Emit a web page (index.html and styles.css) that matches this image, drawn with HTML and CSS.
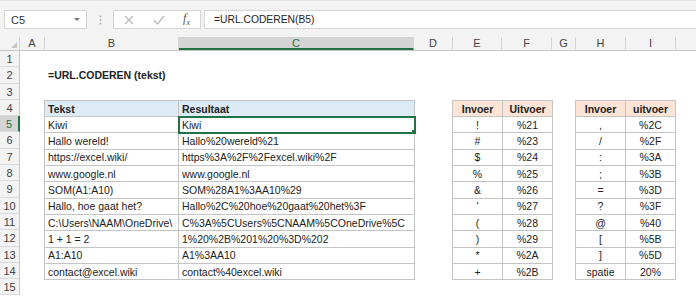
FILE: index.html
```html
<!DOCTYPE html>
<html lang="nl">
<head>
    <meta charset="UTF-8">
    <meta name="viewport" content="width=device-width, initial-scale=1.0">
    <title>URL.CODEREN</title>
    <link rel="stylesheet" href="styles.css">
</head>
<body>

    <!-- Formula bar -->
    <div class="formula-bar">
        <div class="name-box">
            <span>C5</span>
            <span class="caret"></span>
        </div>
        <div class="grip">
            <svg width="3" height="10" viewBox="0 0 3 10">
                <circle cx="1.5" cy="1.5" r="0.9" fill="#b0b0b0"/>
                <circle cx="1.5" cy="5" r="0.9" fill="#b0b0b0"/>
                <circle cx="1.5" cy="8.5" r="0.9" fill="#b0b0b0"/>
            </svg>
        </div>
        <div class="fx-buttons">
            <svg width="10" height="10" viewBox="0 0 10 10"><path d="M1 1 L9 9 M9 1 L1 9" stroke="#b8b8b8" stroke-width="1.2" fill="none"/></svg>
            <svg width="12" height="10" viewBox="0 0 12 10"><path d="M1 5.5 L4.5 9 L11 1" stroke="#b8b8b8" stroke-width="1.2" fill="none"/></svg>
            <span class="fx">f<sub>x</sub></span>
        </div>
        <div class="formula-input">=URL.CODEREN(B5)</div>
    </div>

    <!-- Column headers -->
    <div class="col-headers">
        <div class="corner"><span class="corner-mark"></span></div>
        <div class="col-head col-a">A</div>
        <div class="col-head col-b">B</div>
        <div class="col-head col-c active">C</div>
        <div class="col-head col-d">D</div>
        <div class="col-head col-e">E</div>
        <div class="col-head col-f">F</div>
        <div class="col-head col-g">G</div>
        <div class="col-head col-h">H</div>
        <div class="col-head col-i">I</div>
        <div class="col-head col-rest"></div>
    </div>

    <div class="sheet">
        <div class="row-headers">
            <div class="row-head">1</div>
            <div class="row-head">2</div>
            <div class="row-head">3</div>
            <div class="row-head">4</div>
            <div class="row-head active">5</div>
            <div class="row-head">6</div>
            <div class="row-head">7</div>
            <div class="row-head">8</div>
            <div class="row-head">9</div>
            <div class="row-head">10</div>
            <div class="row-head">11</div>
            <div class="row-head">12</div>
            <div class="row-head">13</div>
            <div class="row-head">14</div>
            <div class="row-head">15</div>
        </div>

        <div class="canvas">
            <div class="title">=URL.CODEREN (tekst)</div>

            <!-- Voorbeelden -->
            <table class="data examples">
                <colgroup><col class="w-b"><col class="w-c"></colgroup>
                <tr class="head-blue"><th>Tekst</th><th>Resultaat</th></tr>
                <tr><td>Kiwi</td><td class="selected">Kiwi<span class="handle"></span></td></tr>
                <tr><td>Hallo wereld!</td><td>Hallo%20wereld%21</td></tr>
                <tr><td>https://excel.wiki/</td><td>https%3A%2F%2Fexcel.wiki%2F</td></tr>
                <tr><td>www.google.nl</td><td>www.google.nl</td></tr>
                <tr><td>SOM(A1:A10)</td><td>SOM%28A1%3AA10%29</td></tr>
                <tr><td>Hallo, hoe gaat het?</td><td>Hallo%2C%20hoe%20gaat%20het%3F</td></tr>
                <tr><td class="clip">C:\Users\NAAM\OneDrive\</td><td>C%3A%5CUsers%5CNAAM%5COneDrive%5C</td></tr>
                <tr><td>1 + 1 = 2</td><td>1%20%2B%201%20%3D%202</td></tr>
                <tr><td>A1:A10</td><td>A1%3AA10</td></tr>
                <tr><td>contact@excel.wiki</td><td>contact%40excel.wiki</td></tr>
            </table>

            <!-- Tekens 1 -->
            <table class="data codes codes-1">
                <colgroup><col class="w-e"><col class="w-f"></colgroup>
                <tr class="head-orange"><th>Invoer</th><th>Uitvoer</th></tr>
                <tr><td>!</td><td>%21</td></tr>
                <tr><td>#</td><td>%23</td></tr>
                <tr><td>$</td><td>%24</td></tr>
                <tr><td>%</td><td>%25</td></tr>
                <tr><td>&amp;</td><td>%26</td></tr>
                <tr><td>'</td><td>%27</td></tr>
                <tr><td>(</td><td>%28</td></tr>
                <tr><td>)</td><td>%29</td></tr>
                <tr><td>*</td><td>%2A</td></tr>
                <tr><td>+</td><td>%2B</td></tr>
            </table>

            <!-- Tekens 2 -->
            <table class="data codes codes-2">
                <colgroup><col class="w-h"><col class="w-i"></colgroup>
                <tr class="head-orange"><th>Invoer</th><th>uitvoer</th></tr>
                <tr><td>,</td><td>%2C</td></tr>
                <tr><td>/</td><td>%2F</td></tr>
                <tr><td>:</td><td>%3A</td></tr>
                <tr><td>;</td><td>%3B</td></tr>
                <tr><td>=</td><td>%3D</td></tr>
                <tr><td>?</td><td>%3F</td></tr>
                <tr><td>@</td><td>%40</td></tr>
                <tr><td>[</td><td>%5B</td></tr>
                <tr><td>]</td><td>%5D</td></tr>
                <tr><td>spatie</td><td>20%</td></tr>
            </table>
        </div>
    </div>

</body>
</html>
```

FILE: styles.css
```css
body {
    margin: 0;
    width: 696px;
    height: 297px;
    overflow: hidden;
    font-family: "Liberation Sans", Arial, sans-serif;
    background: #fff;
    color: #222;
}

/* Formula bar */
.formula-bar {
    display: flex;
    height: 37px;
    box-sizing: border-box;
    padding: 9px 0 8px 4px;
    background: #f3f3f3;
    border-top: 1px solid #e2e2e2;
}

.name-box {
    width: 83px;
    display: flex;
    align-items: center;
    justify-content: space-between;
    padding: 0 6px 0 6px;
    box-sizing: border-box;
    background: #fff;
    border: 1px solid #d6d6d6;
    font-size: 11px;
    color: #333;
}

.caret {
    width: 0;
    height: 0;
    border-left: 3px solid transparent;
    border-right: 3px solid transparent;
    border-top: 3px solid #777;
}

.grip {
    width: 26px;
    display: flex;
    align-items: center;
    justify-content: center;
}

.fx-buttons {
    width: 88px;
    display: flex;
    align-items: center;
    justify-content: space-between;
    padding: 0 10px 0 10px;
    box-sizing: border-box;
    background: #fff;
    border: 1px solid #d6d6d6;
}

.fx {
    font-family: "Liberation Serif", "Times New Roman", serif;
    font-style: italic;
    font-size: 12px;
    color: #555;
}

.fx sub {
    font-size: 8px;
}

.formula-input {
    flex: 1;
    margin-left: 3px;
    display: flex;
    align-items: center;
    padding-left: 9px;
    background: #fff;
    border: 1px solid #d6d6d6;
    border-right: none;
    font-size: 10.3px;
    color: #222;
}

/* Column headers */
.col-headers {
    display: flex;
    height: 13px;
    background: #f3f3f3;
    border-bottom: 1px solid #c6c6c6;
    font-size: 11px;
    color: #444;
}

.corner {
    width: 20px;
    position: relative;
    border-right: 1px solid #d4d4d4;
    box-sizing: border-box;
}

.corner-mark {
    position: absolute;
    right: 2px;
    bottom: 2px;
    width: 0;
    height: 0;
    border-left: 6px solid transparent;
    border-bottom: 6px solid #c4c4c4;
}

.col-head {
    box-sizing: border-box;
    border-right: 1px solid #d4d4d4;
    text-align: center;
    line-height: 13px;
}

.col-head.active {
    background: #d4d4d4;
    color: #217346;
    border-bottom: 2px solid #217346;
    line-height: 12px;
}

.col-a { width: 25px; }
.col-b { width: 134px; }
.col-c { width: 235px; }
.col-d { width: 39px; }
.col-e { width: 49px; }
.col-f { width: 50px; }
.col-g { width: 24px; }
.col-h { width: 50px; }
.col-i { width: 50px; }
.col-rest { flex: 1; border-right: none; }

/* Sheet body */
.sheet {
    display: flex;
}

.row-headers {
    width: 20px;
    background: #f3f3f3;
    border-right: 1px solid #c6c6c6;
    box-sizing: border-box;
    font-size: 11px;
    color: #444;
}

.row-head {
    height: 16.3px;
    box-sizing: border-box;
    border-bottom: 1px solid #dadada;
    text-align: center;
    line-height: 16px;
}

.row-head.active {
    background: #d4d4d4;
    color: #217346;
    border-right: 2px solid #217346;
    margin-right: -1px;
}

.canvas {
    flex: 1;
    display: grid;
    grid-template-columns: 25px 134px 235px 39px 49px 50px 24px 50px 50px;
    grid-template-rows: 16.3px 16.3px 16.3px auto;
    align-items: start;
}

.title {
    grid-column: 2 / 4;
    grid-row: 2;
    padding-left: 3px;
    font-size: 10.5px;
    font-weight: bold;
    line-height: 17px;
}

/* Tables */
.data {
    grid-row: 4;
    border-collapse: collapse;
    table-layout: fixed;
    font-size: 10.5px;
    margin-left: -1px;
}

.data tr {
    height: 16.3px;
}

.data th,
.data td {
    padding: 0 3px;
    border: 1px solid #c4c4c4;
    white-space: nowrap;
    overflow: hidden;
    line-height: 14px;
    color: #222;
}

.data th {
    text-align: left;
    font-weight: bold;
}

.examples {
    grid-column: 2 / 4;
    width: 370px;
}

.w-b { width: 134px; }
.w-c { width: 236px; }
.w-e { width: 50px; }
.w-f { width: 50px; }
.w-h { width: 50px; }
.w-i { width: 50px; }

.codes {
    width: 101px;
}

.codes-1 {
    grid-column: 5 / 7;
}

.codes-2 {
    grid-column: 8 / 10;
}

.codes th,
.codes td {
    text-align: center;
}

.head-blue th {
    background: #ddebf7;
}

.head-orange th {
    background: #fce4d6;
}

.clip {
    text-overflow: clip;
}

.selected {
    position: relative;
    outline: 2px solid #217346;
    outline-offset: -1px;
    overflow: visible;
}

.handle {
    position: absolute;
    right: -4px;
    bottom: -4px;
    width: 5px;
    height: 5px;
    background: #217346;
    border: 1px solid #fff;
    z-index: 2;
}
```
